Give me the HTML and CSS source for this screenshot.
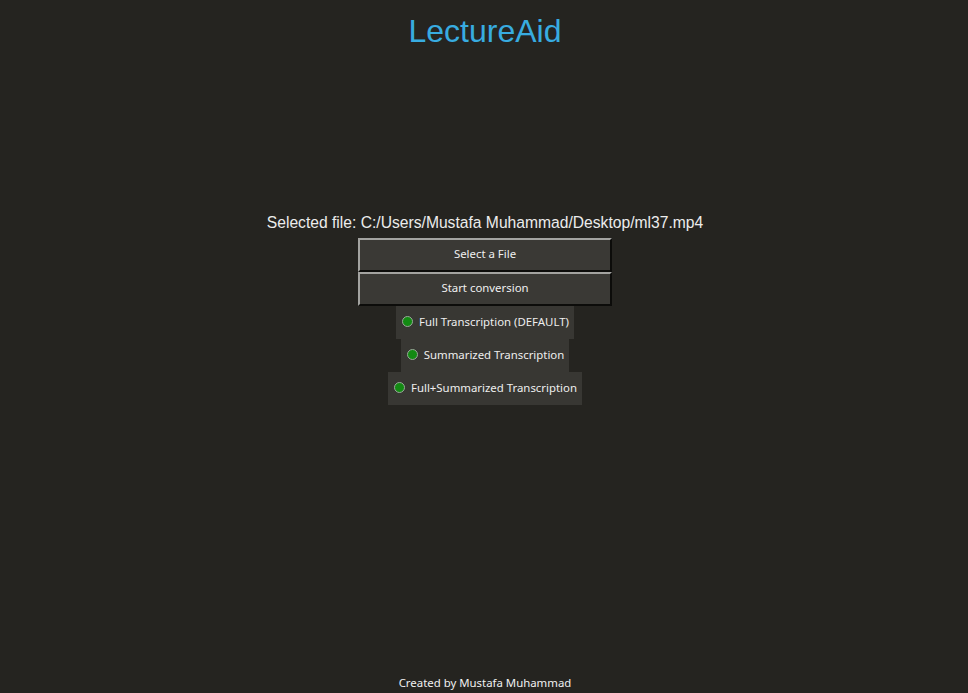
FILE: index.html
```html
<!DOCTYPE html>
<html>
<head>
<meta charset="utf-8">
<link rel="stylesheet" href="styles.css">
</head>
<body>
<div class="app">
  <h1 class="title">LectureAid</h1>
  <div class="main">
    <div class="selected">Selected file: C:/Users/Mustafa Muhammad/Desktop/ml37.mp4</div>
    <button class="btn">Select a File</button>
    <button class="btn">Start conversion</button>
    <label class="radio"><span class="dot"></span>Full Transcription (DEFAULT)</label>
    <label class="radio"><span class="dot"></span>Summarized Transcription</label>
    <label class="radio"><span class="dot"></span>Full+Summarized Transcription</label>
  </div>
  <div class="footer">Created by Mustafa Muhammad</div>
</div>
</body>
</html>
```
FILE: styles.css
```css
html, body {
  margin: 0;
  padding: 0;
  background: #252420;
}
.app {
  width: 968px;
  height: 693px;
  display: flex;
  flex-direction: column;
  align-items: center;
}
.title {
  margin: 13px 0 0 2px;
  font-family: "Liberation Sans", Arial, sans-serif;
  font-weight: normal;
  font-size: 32px;
  line-height: 37px;
  color: #38ace0;
}
.main {
  margin-top: 163px;
  padding-left: 2px;
  display: flex;
  flex-direction: column;
  align-items: center;
}
.selected {
  font-family: "Liberation Sans", Arial, sans-serif;
  font-size: 15.65px;
  line-height: 20px;
  color: #ececec;
  margin-bottom: 5px;
}
.btn {
  width: 254px;
  height: 34px;
  margin: 0;
  box-sizing: border-box;
  background: #3a3935;
  border-style: solid;
  border-width: 2px;
  border-color: #a3a3a0 #0c0c0a #0c0c0a #a3a3a0;
  color: #f0f0f0;
  font-family: "Noto Sans", "Open Sans", sans-serif;
  font-size: 11.4px;
  padding: 0 0 3px 0;
}
.radio {
  display: flex;
  align-items: center;
  box-sizing: border-box;
  height: 33px;
  padding: 0 5px 2px 6px;
  background: #383733;
  color: #eeeeee;
  font-family: "Noto Sans", "Open Sans", sans-serif;
  font-size: 11.4px;
  gap: 6px;
}
.dot {
  width: 9px;
  height: 9px;
  border-radius: 50%;
  background: #138a13;
  border: 1px solid #9aa89a;
}
.footer {
  margin-top: auto;
  margin-bottom: 2px;
  margin-left: 2px;
  font-family: "Noto Sans", "Open Sans", sans-serif;
  font-size: 11.4px;
  line-height: 16px;
  color: #f0f0f0;
}
```
